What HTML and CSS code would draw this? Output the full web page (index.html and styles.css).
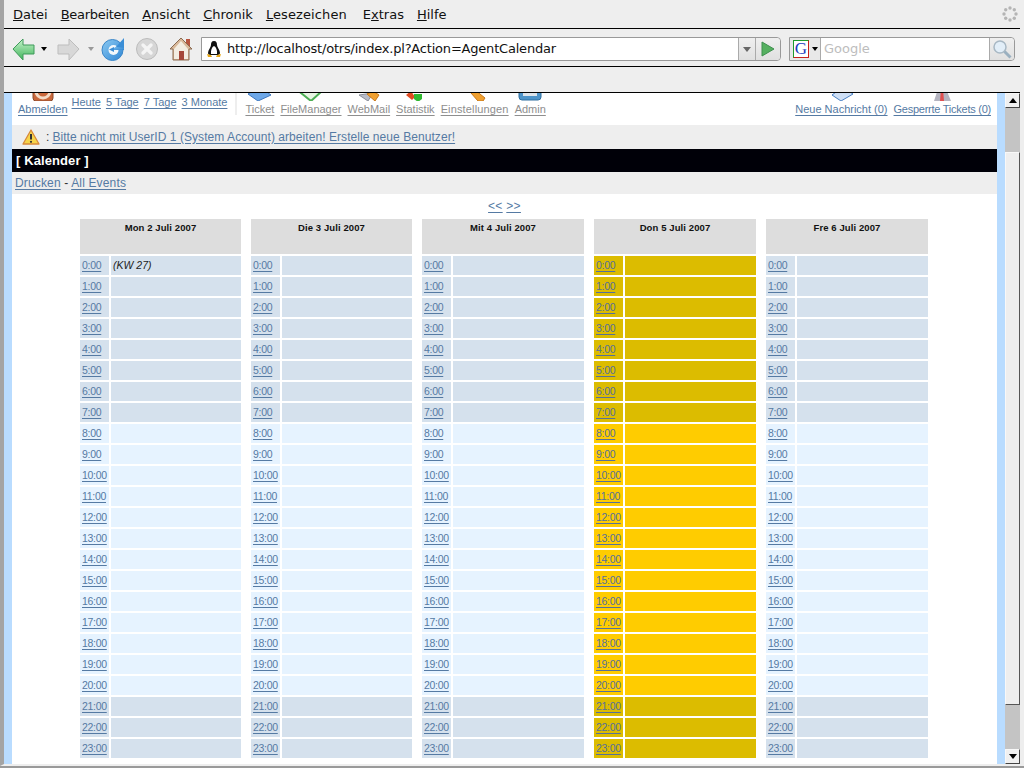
FILE: index.html
```html
<!DOCTYPE html>
<html lang="de">
<head>
<meta charset="utf-8">
<title>OTRS Kalender</title>
<link rel="stylesheet" href="styles.css">
</head>
<body>
<div class="window">
  <div class="menubar">
    <span class="mi"><u>D</u>atei</span><span class="mi narrow"><u>B</u>earbeiten</span><span class="mi"><u>A</u>nsicht</span><span class="mi"><u>C</u>hronik</span><span class="mi wide"><u>L</u>esezeichen</span><span class="mi">E<u>x</u>tras</span><span class="mi"><u>H</u>ilfe</span>
    <svg class="throbber" width="16" height="16" viewBox="0 0 16 16"><g fill="#b4b4b4"><circle cx="8" cy="2" r="1.7"/><circle cx="12.3" cy="3.7" r="1.7"/><circle cx="14" cy="8" r="1.7"/><circle cx="12.3" cy="12.3" r="1.7"/><circle cx="8" cy="14" r="1.7"/><circle cx="3.7" cy="12.3" r="1.7"/><circle cx="2" cy="8" r="1.7"/><circle cx="3.7" cy="3.7" r="1.7"/></g></svg>
  </div>
  <div class="toolbar">
    <svg class="tb-back" width="24" height="24" viewBox="0 0 24 24"><defs><linearGradient id="gb" x1="0" y1="0" x2="0" y2="1"><stop offset="0" stop-color="#c8f4cc"/><stop offset="1" stop-color="#3fb45a"/></linearGradient></defs><path d="M1 12 11 2v6h11v9H11v6z" fill="url(#gb)" stroke="#3f9a5a"/></svg>
    <span class="drop"></span>
    <svg class="tb-fwd" width="24" height="24" viewBox="0 0 24 24"><path d="M23 12 13 2v6H2v9h11v6z" fill="#d8d8d8" stroke="#bdbdbd"/></svg>
    <span class="drop dim"></span>
    <svg class="tb-reload" width="24" height="24" viewBox="0 0 24 24"><defs><linearGradient id="gr" x1="0" y1="0" x2="1" y2="1"><stop offset="0" stop-color="#8ccaf2"/><stop offset="1" stop-color="#2f86d4"/></linearGradient></defs><circle cx="11.500" cy="13" r="10.500" fill="url(#gr)" stroke="#3a86c8"/><circle cx="12.500" cy="13" r="5" fill="#f2f8fc"/><path d="M10 13h13V9H16z" fill="url(#gr)"/><path d="M15 10 23 1v10z" fill="#3a8ed6"/><path d="M8 12.500 13 10v5z" fill="#3a8ed6"/></svg>
    <svg class="tb-stop" width="24" height="24" viewBox="0 0 24 24"><circle cx="12" cy="12" r="10.500" fill="#d6d6d6" stroke="#bcbcbc"/><path d="m8 8 8 8m0-8-8 8" stroke="#f4f4f4" stroke-width="3.400" stroke-linecap="round"/></svg>
    <svg class="tb-home" width="24" height="24" viewBox="0 0 24 24"><path d="M17 2h4v8h-4z" fill="#b8553f"/><path d="M12 1 1 12h3v11h16V12h3z" fill="#d9b99a" stroke="#8a6a50"/><path d="M5 12 12 4l7 8v10H5z" fill="#f3ede2"/><path d="M10 14h5v9h-5z" fill="#a5483a"/></svg>
    <div class="urlbar">
      <svg class="tux" width="16" height="18" viewBox="0 0 16 18"><path d="M8 1C5.500 1 5 3 5 5c0 2-3 5-3 8 0 1 1 2 2 2h8c1 0 2-1 2-2 0-3-3-6-3-8 0-2-.5-4-3-4z" fill="#111"/><path d="M8 6c-2 1-3.500 4-3 8h6c.5-4-1-7-3-8z" fill="#fff"/><path d="M1 14l4 1 1 2H2zM15 14l-4 1-1 2h4z" fill="#e8a818"/></svg>
      <span class="urltext">http://localhost/otrs/index.pl?Action=AgentCalendar</span>
      <span class="urldrop"><span class="drop grey"></span></span>
      <span class="urlgo"><svg width="14" height="16" viewBox="0 0 14 16"><path d="M1 1l12 7-12 7z" fill="#55b060" stroke="#3f8f4f"/></svg></span>
    </div>
    <div class="searchbar">
      <span class="engine"><span class="glogo">G</span><span class="drop"></span></span>
      <span class="searchtext">Google</span>
      <span class="searchgo"><svg width="20" height="20" viewBox="0 0 20 20"><circle cx="8" cy="8" r="6" fill="#e2eef8" stroke="#a8b8c4" stroke-width="1.500"/><path d="m12.500 12.500 6 6" stroke="#9ab0c0" stroke-width="3"/></svg></span>
    </div>
  </div>
  <div class="bookmarks"></div>
  <div class="viewport">
    <div class="page">
      <div class="page-inner">
        <div class="nav">
          <a class="navitem first"><svg class="ico" width="22" height="24" viewBox="0 0 22 24"><rect x="1" y="1" width="20" height="23" rx="3" fill="#c9683c" stroke="#8e4a2a"/><circle cx="11" cy="14" r="7" fill="none" stroke="#f3dcc8" stroke-width="3"/></svg><span class="lnk">Abmelden</span></a>
          <div class="days">
            <a class="lnk">Heute</a><a class="lnk">5 Tage</a><a class="lnk">7 Tage</a><a class="lnk">3 Monate</a>
          </div>
          <span class="navsep"></span>
          <a class="navitem grey"><svg class="ico" width="24" height="24" viewBox="0 0 24 24"><path d="M12 10 23 18 10 24 0 17z" fill="#6ea8e8" stroke="#3f78c0"/></svg><span class="lnk">Ticket</span></a>
          <a class="navitem grey"><svg class="ico" width="24" height="24" viewBox="0 0 24 24"><path d="M2 16 12 24 23 14 12 8z" fill="#e8f6e4" stroke="#4cae54" stroke-width="2"/></svg><span class="lnk">FileManager</span></a>
          <a class="navitem grey"><svg class="ico" width="24" height="24" viewBox="0 0 24 24"><path d="M2 18 11 24 16 16z" fill="#b8bcc8" stroke="#8a8e9a"/><path d="M10 17 16 14 22 18 18 24z" fill="#f0a030" stroke="#c87818"/></svg><span class="lnk">WebMail</span></a>
          <a class="navitem grey"><svg class="ico" width="24" height="24" viewBox="0 0 24 24"><path d="M3 18 8 14 12 20 9 23z" fill="#e04a20"/><path d="M11 17 19 17 19 22 15 25 11 22z" fill="#30b830"/></svg><span class="lnk">Statistik</span></a>
          <a class="navitem grey roomy"><svg class="ico" width="24" height="24" viewBox="0 0 24 24"><path d="M8 16 12 13 22 21 20 24 15 24z" fill="#f0a030" stroke="#c87818"/></svg><span class="lnk">Einstellungen</span></a>
          <a class="navitem grey"><svg class="ico" width="24" height="24" viewBox="0 0 24 24"><rect x="1" y="2" width="22" height="21" rx="3" fill="#4d93c8" stroke="#2f6f9f"/><rect x="5" y="6" width="14" height="13" fill="#dde4ea"/></svg><span class="lnk">Admin</span></a>
          <span class="spacer"></span>
          <a class="navitem"><svg class="ico" width="24" height="24" viewBox="0 0 24 24"><path d="M14 10 24 17 12 24 3 18z" fill="#cfe0f6" stroke="#4a80c4"/></svg><span class="lnk">Neue Nachricht (0)</span></a>
          <a class="navitem tight"><svg class="ico" width="24" height="24" viewBox="0 0 24 24"><path d="M8 12 16 12 21 24H4z" fill="#b4b4c0"/><path d="M11 12h2l1 12h-4z" fill="#e05050"/></svg><span class="lnk">Gesperrte Tickets (0)</span></a>
        </div>
        <div class="notice">
          <svg width="18" height="16" viewBox="0 0 18 16"><path d="M9 1 17 15H1z" fill="#f6d44a" stroke="#d8883a" stroke-width="1.300" stroke-linejoin="round"/><path d="M9 5v5.500" stroke="#333" stroke-width="2"/><circle cx="9" cy="12.800" r="1.100" fill="#333"/></svg>
          <span class="colon">:</span><a class="lnk">Bitte nicht mit UserID 1 (System Account) arbeiten! Erstelle neue Benutzer!</a>
        </div>
        <div class="titlebar">[ Kalender ]</div>
        <div class="actions"><a class="lnk">Drucken</a> - <a class="lnk">All Events</a></div>
        <div class="pager"><a class="lnk">&lt;&lt;</a> <a class="lnk">&gt;&gt;</a></div>
        <div class="calendar">
          <div class="day">
            <div class="head">Mon 2 Juli 2007</div>
            <div class="t"><a class="lnk">0:00</a></div><div class="c"><em>(KW 27)</em></div>
            <div class="t"><a class="lnk">1:00</a></div><div class="c"></div>
            <div class="t"><a class="lnk">2:00</a></div><div class="c"></div>
            <div class="t"><a class="lnk">3:00</a></div><div class="c"></div>
            <div class="t"><a class="lnk">4:00</a></div><div class="c"></div>
            <div class="t"><a class="lnk">5:00</a></div><div class="c"></div>
            <div class="t"><a class="lnk">6:00</a></div><div class="c"></div>
            <div class="t"><a class="lnk">7:00</a></div><div class="c"></div>
            <div class="t"><a class="lnk">8:00</a></div><div class="c"></div>
            <div class="t"><a class="lnk">9:00</a></div><div class="c"></div>
            <div class="t"><a class="lnk">10:00</a></div><div class="c"></div>
            <div class="t"><a class="lnk">11:00</a></div><div class="c"></div>
            <div class="t"><a class="lnk">12:00</a></div><div class="c"></div>
            <div class="t"><a class="lnk">13:00</a></div><div class="c"></div>
            <div class="t"><a class="lnk">14:00</a></div><div class="c"></div>
            <div class="t"><a class="lnk">15:00</a></div><div class="c"></div>
            <div class="t"><a class="lnk">16:00</a></div><div class="c"></div>
            <div class="t"><a class="lnk">17:00</a></div><div class="c"></div>
            <div class="t"><a class="lnk">18:00</a></div><div class="c"></div>
            <div class="t"><a class="lnk">19:00</a></div><div class="c"></div>
            <div class="t"><a class="lnk">20:00</a></div><div class="c"></div>
            <div class="t"><a class="lnk">21:00</a></div><div class="c"></div>
            <div class="t"><a class="lnk">22:00</a></div><div class="c"></div>
            <div class="t"><a class="lnk">23:00</a></div><div class="c"></div>
          </div>
          <div class="day">
            <div class="head">Die 3 Juli 2007</div>
            <div class="t"><a class="lnk">0:00</a></div><div class="c"></div>
            <div class="t"><a class="lnk">1:00</a></div><div class="c"></div>
            <div class="t"><a class="lnk">2:00</a></div><div class="c"></div>
            <div class="t"><a class="lnk">3:00</a></div><div class="c"></div>
            <div class="t"><a class="lnk">4:00</a></div><div class="c"></div>
            <div class="t"><a class="lnk">5:00</a></div><div class="c"></div>
            <div class="t"><a class="lnk">6:00</a></div><div class="c"></div>
            <div class="t"><a class="lnk">7:00</a></div><div class="c"></div>
            <div class="t"><a class="lnk">8:00</a></div><div class="c"></div>
            <div class="t"><a class="lnk">9:00</a></div><div class="c"></div>
            <div class="t"><a class="lnk">10:00</a></div><div class="c"></div>
            <div class="t"><a class="lnk">11:00</a></div><div class="c"></div>
            <div class="t"><a class="lnk">12:00</a></div><div class="c"></div>
            <div class="t"><a class="lnk">13:00</a></div><div class="c"></div>
            <div class="t"><a class="lnk">14:00</a></div><div class="c"></div>
            <div class="t"><a class="lnk">15:00</a></div><div class="c"></div>
            <div class="t"><a class="lnk">16:00</a></div><div class="c"></div>
            <div class="t"><a class="lnk">17:00</a></div><div class="c"></div>
            <div class="t"><a class="lnk">18:00</a></div><div class="c"></div>
            <div class="t"><a class="lnk">19:00</a></div><div class="c"></div>
            <div class="t"><a class="lnk">20:00</a></div><div class="c"></div>
            <div class="t"><a class="lnk">21:00</a></div><div class="c"></div>
            <div class="t"><a class="lnk">22:00</a></div><div class="c"></div>
            <div class="t"><a class="lnk">23:00</a></div><div class="c"></div>
          </div>
          <div class="day">
            <div class="head">Mit 4 Juli 2007</div>
            <div class="t"><a class="lnk">0:00</a></div><div class="c"></div>
            <div class="t"><a class="lnk">1:00</a></div><div class="c"></div>
            <div class="t"><a class="lnk">2:00</a></div><div class="c"></div>
            <div class="t"><a class="lnk">3:00</a></div><div class="c"></div>
            <div class="t"><a class="lnk">4:00</a></div><div class="c"></div>
            <div class="t"><a class="lnk">5:00</a></div><div class="c"></div>
            <div class="t"><a class="lnk">6:00</a></div><div class="c"></div>
            <div class="t"><a class="lnk">7:00</a></div><div class="c"></div>
            <div class="t"><a class="lnk">8:00</a></div><div class="c"></div>
            <div class="t"><a class="lnk">9:00</a></div><div class="c"></div>
            <div class="t"><a class="lnk">10:00</a></div><div class="c"></div>
            <div class="t"><a class="lnk">11:00</a></div><div class="c"></div>
            <div class="t"><a class="lnk">12:00</a></div><div class="c"></div>
            <div class="t"><a class="lnk">13:00</a></div><div class="c"></div>
            <div class="t"><a class="lnk">14:00</a></div><div class="c"></div>
            <div class="t"><a class="lnk">15:00</a></div><div class="c"></div>
            <div class="t"><a class="lnk">16:00</a></div><div class="c"></div>
            <div class="t"><a class="lnk">17:00</a></div><div class="c"></div>
            <div class="t"><a class="lnk">18:00</a></div><div class="c"></div>
            <div class="t"><a class="lnk">19:00</a></div><div class="c"></div>
            <div class="t"><a class="lnk">20:00</a></div><div class="c"></div>
            <div class="t"><a class="lnk">21:00</a></div><div class="c"></div>
            <div class="t"><a class="lnk">22:00</a></div><div class="c"></div>
            <div class="t"><a class="lnk">23:00</a></div><div class="c"></div>
          </div>
          <div class="day today">
            <div class="head">Don 5 Juli 2007</div>
            <div class="t"><a class="lnk">0:00</a></div><div class="c"></div>
            <div class="t"><a class="lnk">1:00</a></div><div class="c"></div>
            <div class="t"><a class="lnk">2:00</a></div><div class="c"></div>
            <div class="t"><a class="lnk">3:00</a></div><div class="c"></div>
            <div class="t"><a class="lnk">4:00</a></div><div class="c"></div>
            <div class="t"><a class="lnk">5:00</a></div><div class="c"></div>
            <div class="t"><a class="lnk">6:00</a></div><div class="c"></div>
            <div class="t"><a class="lnk">7:00</a></div><div class="c"></div>
            <div class="t"><a class="lnk">8:00</a></div><div class="c"></div>
            <div class="t"><a class="lnk">9:00</a></div><div class="c"></div>
            <div class="t"><a class="lnk">10:00</a></div><div class="c"></div>
            <div class="t"><a class="lnk">11:00</a></div><div class="c"></div>
            <div class="t"><a class="lnk">12:00</a></div><div class="c"></div>
            <div class="t"><a class="lnk">13:00</a></div><div class="c"></div>
            <div class="t"><a class="lnk">14:00</a></div><div class="c"></div>
            <div class="t"><a class="lnk">15:00</a></div><div class="c"></div>
            <div class="t"><a class="lnk">16:00</a></div><div class="c"></div>
            <div class="t"><a class="lnk">17:00</a></div><div class="c"></div>
            <div class="t"><a class="lnk">18:00</a></div><div class="c"></div>
            <div class="t"><a class="lnk">19:00</a></div><div class="c"></div>
            <div class="t"><a class="lnk">20:00</a></div><div class="c"></div>
            <div class="t"><a class="lnk">21:00</a></div><div class="c"></div>
            <div class="t"><a class="lnk">22:00</a></div><div class="c"></div>
            <div class="t"><a class="lnk">23:00</a></div><div class="c"></div>
          </div>
          <div class="day">
            <div class="head">Fre 6 Juli 2007</div>
            <div class="t"><a class="lnk">0:00</a></div><div class="c"></div>
            <div class="t"><a class="lnk">1:00</a></div><div class="c"></div>
            <div class="t"><a class="lnk">2:00</a></div><div class="c"></div>
            <div class="t"><a class="lnk">3:00</a></div><div class="c"></div>
            <div class="t"><a class="lnk">4:00</a></div><div class="c"></div>
            <div class="t"><a class="lnk">5:00</a></div><div class="c"></div>
            <div class="t"><a class="lnk">6:00</a></div><div class="c"></div>
            <div class="t"><a class="lnk">7:00</a></div><div class="c"></div>
            <div class="t"><a class="lnk">8:00</a></div><div class="c"></div>
            <div class="t"><a class="lnk">9:00</a></div><div class="c"></div>
            <div class="t"><a class="lnk">10:00</a></div><div class="c"></div>
            <div class="t"><a class="lnk">11:00</a></div><div class="c"></div>
            <div class="t"><a class="lnk">12:00</a></div><div class="c"></div>
            <div class="t"><a class="lnk">13:00</a></div><div class="c"></div>
            <div class="t"><a class="lnk">14:00</a></div><div class="c"></div>
            <div class="t"><a class="lnk">15:00</a></div><div class="c"></div>
            <div class="t"><a class="lnk">16:00</a></div><div class="c"></div>
            <div class="t"><a class="lnk">17:00</a></div><div class="c"></div>
            <div class="t"><a class="lnk">18:00</a></div><div class="c"></div>
            <div class="t"><a class="lnk">19:00</a></div><div class="c"></div>
            <div class="t"><a class="lnk">20:00</a></div><div class="c"></div>
            <div class="t"><a class="lnk">21:00</a></div><div class="c"></div>
            <div class="t"><a class="lnk">22:00</a></div><div class="c"></div>
            <div class="t"><a class="lnk">23:00</a></div><div class="c"></div>
          </div>
        </div>
      </div>
    </div>
    <div class="scrollbar">
      <span class="sb-btn"><span class="arrow-up"></span></span>
      <span class="sb-track top"></span>
      <span class="sb-thumb"></span>
      <span class="sb-track bottom"></span>
      <span class="sb-btn"><span class="arrow-down"></span></span>
    </div>
  </div>
</div>
</body>
</html>
```
FILE: styles.css
```css
* { box-sizing: border-box; }
html, body { margin: 0; height: 100%; overflow: hidden; }
body { background: #9a9a9a; font-family: "Liberation Sans", Arial, sans-serif; }

.window {
  width: 1024px; height: 766px; display: flex; flex-direction: column;
  background: #eeeeee;
  border-left: 4px solid #a4a4a4;
  border-right: 4px solid #eeeeee;
  border-bottom: 2px solid #eeeeee;
}

/* Browser chrome */
.menubar {
  height: 28px; flex: none; display: flex; align-items: center;
  padding-left: 9px;
  font: 13px "DejaVu Sans", sans-serif; color: #111;
}
.mi { margin-right: 13px; }
.mi.narrow { letter-spacing: -0.3px; }
.mi.wide { letter-spacing: 0.1px; margin-right: 16px; }
.throbber { margin-left: auto; margin-right: 2px; }

.toolbar {
  height: 39px; flex: none; display: flex; align-items: center;
  padding-left: 8px; padding-top: 3px;
  border-top: 1px solid #000;
  border-bottom: 1px solid #000;
}
.tb-back { margin-right: 5px; }
.tb-fwd { margin-left: 9px; margin-right: 8px; }
.tb-reload { margin-left: 7px; }
.tb-stop { margin-left: 10px; }
.tb-home { margin-left: 10px; }
.drop { display: inline-block; width: 0; height: 0; border: 3px solid transparent; border-top: 4px solid #000; border-bottom: 0; }
.drop.dim { border-top-color: #999; }
.drop.grey { border: 4px solid transparent; border-top: 5px solid #666; border-bottom: 0; }

.urlbar {
  margin-left: 8px; width: 580px; height: 24px; display: flex; align-items: stretch;
  background: #fff; border: 1px solid #999; border-radius: 0 4px 4px 0;
}
.tux { margin: 2px 0 0 4px; flex: none; }
.urltext { flex: 1; padding-left: 5px; font: 13px/22px "DejaVu Sans", sans-serif; letter-spacing: -0.2px; color: #111; }
.urldrop, .urlgo { display: flex; align-items: center; justify-content: center; background: linear-gradient(#efefef, #e0e0e0); border-left: 1px solid #aaa; }
.urldrop { width: 17px; }
.urlgo { width: 25px; border-radius: 0 4px 4px 0; }

.searchbar {
  margin-left: 8px; width: 226px; height: 24px; display: flex; align-items: stretch;
  background: #fff; border: 1px solid #999; border-radius: 0 4px 4px 0;
}
.engine { width: 31px; display: flex; align-items: center; gap: 3px; padding-left: 3px; background: #e8e8e8; border-right: 1px solid #aaa; }
.glogo {
  width: 16px; height: 18px; font: 17px/16px "Liberation Serif", serif; text-align: center; color: #1a3bbd; background: #fff;
  border: 1px solid #1f9a2c; border-right-color: #c8201c; border-bottom-color: #c8201c;
}
.searchtext { flex: 1; padding-left: 3px; font: 13px/22px "DejaVu Sans", sans-serif; color: #bdbdbd; }
.searchgo { width: 25px; display: flex; align-items: center; justify-content: center; background: linear-gradient(#efefef, #e0e0e0); border-left: 1px solid #aaa; border-radius: 0 4px 4px 0; }

.bookmarks { height: 26px; flex: none; border-bottom: 1px solid #000; box-shadow: 0 1px 0 #8a8a8a; }

/* Page area */
.viewport { flex: 1; min-height: 0; display: flex; }
.page { flex: 1; min-width: 0; overflow: hidden; background: #fff; border-left: 8px solid #b9dcff; border-right: 8px solid #b9dcff; }
.page-inner { margin-top: -16px; }

.lnk { color: #557aa3; text-decoration: underline; text-underline-offset: 2px; }

.nav { height: 48px; display: flex; align-items: flex-start; padding: 0 6px; font-size: 11px; }
.navitem { display: flex; flex-direction: column; align-items: center; margin-right: 6px; line-height: 14px; }
.navitem:last-child { margin-right: 0; }
.navitem.first { margin-right: 4px; }
.navitem.roomy { letter-spacing: 0.15px; }
.navitem.tight { letter-spacing: -0.25px; }
.navitem .ico { display: block; margin-bottom: 1px; }
.navitem.grey .lnk { color: #8e8e8e; }
.days { display: flex; gap: 5px; padding-top: 18px; line-height: 14px; }
.navsep { width: 2px; height: 22px; margin: 16px 8px 0 8px; background: #eeeeee; }
.spacer { flex: 1; }

.notice { height: 24px; display: flex; align-items: center; gap: 3px; padding-left: 10px; padding-bottom: 1px; background: #eeeeee; font-size: 12px; letter-spacing: 0.06px; color: #333; }
.colon { margin-left: 3px; }
.titlebar { height: 23px; padding-left: 4px; background: #000008; color: #fff; font-weight: bold; font-size: 13px; line-height: 24px; letter-spacing: 0.1px; }
.actions { height: 22px; padding-left: 3px; background: #eeeeee; font-size: 12px; letter-spacing: 0.15px; line-height: 22px; color: #333; }
.pager { height: 25px; text-align: center; font-size: 12px; letter-spacing: 0.3px; line-height: 25px; }

.calendar { display: grid; grid-template-columns: 161px 161px 162px 162px 162px; column-gap: 10px; padding-left: 68px; }
.day { display: grid; grid-template-columns: 29px 1fr; grid-template-rows: 35px; grid-auto-rows: 19px; row-gap: 2px; column-gap: 2px; font-size: 10.500px; line-height: 19px; }
.t { padding-left: 2px; background: #e6f3ff; white-space: nowrap; letter-spacing: -0.3px; }
.c { padding-left: 2px; background: #e6f3ff; }
.c em { color: #222; }
.day > :nth-child(-n+17), .day > :nth-child(n+44) { background: #d5e1ed; }
.today > .t, .today > .c { background: #ffcc00; }
.today > :nth-child(-n+17), .today > :nth-child(n+44) { background: #dcbc00; }
.today > .t .lnk { color: #55709a; }
.day > .head { grid-column: 1 / -1; background: #dddddd; text-align: center; font-weight: bold; font-size: 9.500px; line-height: 17px; color: #111; letter-spacing: 0.1px; }

/* Scrollbar */
.scrollbar { width: 15px; flex: none; display: flex; flex-direction: column; background: #c4c4c4; }
.sb-btn { height: 15px; flex: none; display: flex; align-items: center; justify-content: center; background: #f0f0f0; border: 1px solid #f8f8f8; border-right-color: #444; border-bottom-color: #444; }
.arrow-up { width: 0; height: 0; border: 4px solid transparent; border-bottom: 5px solid #000; border-top: 0; }
.arrow-down { width: 0; height: 0; border: 4px solid transparent; border-top: 5px solid #000; border-bottom: 0; }
.sb-track.top { height: 44px; flex: none; }
.sb-track.bottom { height: 44px; flex: none; }
.sb-thumb { flex: 1; background: #eeeeee; border: 1px solid #f8f8f8; border-right-color: #555; border-bottom-color: #555; }
```
